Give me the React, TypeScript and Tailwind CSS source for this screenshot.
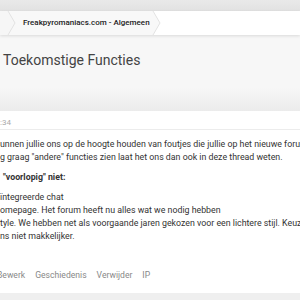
import React from "react";

function Chevron({ left, right }: { left: string; right: string }) {
  return (
    <svg width="9" height="24" viewBox="0 0 9 24" className="block shrink-0" style={{ background: right }}>
      <polygon points="0,0 1,0 8,12 1,24 0,24" fill={left} />
      <polyline points="1,0 8,12 1,24" fill="none" stroke="#e2e2e2" strokeWidth="1" />
    </svg>
  );
}

export default function App() {
  return (
    <div
      className="relative w-[300px] h-[300px] overflow-hidden bg-[#f7f7f7] text-[#333]"
      style={{ fontFamily: "Roboto, 'Liberation Sans', sans-serif" }}
    >
      <div className="h-[11px] bg-gradient-to-b from-[#e9e9e9] to-[#e2e2e2]" />
      <div className="h-[24px] flex bg-white shadow-[0_1px_3px_rgba(0,0,0,0.12)] relative z-10">
        <div className="w-[7px] bg-[#f6f6f6]" />
        <Chevron left="#f6f6f6" right="#f8f8f8" />
        <div className="w-[136px] bg-[#f8f8f8] pl-[7px] flex items-center text-[8px] font-medium text-[#222] whitespace-nowrap">
          Freakpyromaniacs.com - Algemeen
        </div>
        <Chevron left="#f8f8f8" right="#ffffff" />
        <div className="flex-1 bg-white" />
      </div>
      <div className="h-[53px] pl-[3px] pt-[16px]">
        <h1 className="text-[14px] leading-[18px] text-[#444] whitespace-nowrap">Toekomstige Functies</h1>
      </div>
      <div className="h-[23px] bg-gradient-to-b from-[#f7f7f7] to-[#ebebeb]" />
      <div className="h-[182px] bg-white">
        <div className="h-[18px] pt-[7px] text-[8px] leading-[10px] text-[#aaa] whitespace-nowrap">:34</div>
        <div className="h-px bg-[#ececec]" />
        <div className="pt-[8px] text-[8.8px] leading-[13px] text-[#333] whitespace-nowrap">
          <div>unnen jullie ons op de hoogte houden van foutjes die jullie op het nieuwe forum</div>
          <div>g graag "andere" functies zien laat het ons dan ook in deze thread weten.</div>
          <div className="h-[7px]" />
          <div className="pl-[3px] font-bold">"voorlopig" niet:</div>
          <div className="h-[7px]" />
          <div>ïntegreerde chat</div>
          <div>omepage. Het forum heeft nu alles wat we nodig hebben</div>
          <div>tyle. We hebben net als voorgaande jaren gekozen voor een lichtere stijl. Keuze</div>
          <div>ns niet makkelijker.</div>
        </div>
        <div className="mt-[27px] flex gap-[10px] text-[8.6px] leading-[10px] text-[#888] whitespace-nowrap">
          <span className="-ml-[3px]">Bewerk</span>
          <span>Geschiedenis</span>
          <span>Verwijder</span>
          <span>IP</span>
        </div>
      </div>
      <div className="h-[7px] bg-[#efefef]" />
    </div>
  );
}
